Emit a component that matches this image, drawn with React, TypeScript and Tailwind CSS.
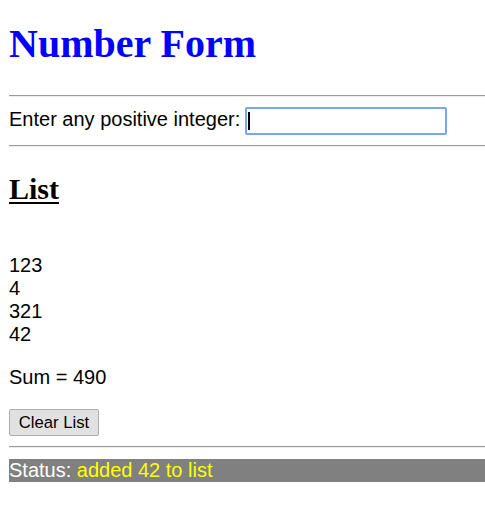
export default function App() {
  const items = [123, 4, 321, 42];
  const sum = items.reduce((a, b) => a + b, 0);

  return (
    <div className="min-h-screen bg-white pl-[9px] font-['Liberation_Sans',Arial,sans-serif] text-[20px] leading-[23px] text-black">
      {/* Title */}
      <h1 className="mt-[21px] mb-[28px] font-['Liberation_Serif','Times_New_Roman',serif] text-[40px] leading-[46px] font-bold text-[#0000ff]">
        Number Form
      </h1>

      <div className="h-[2px] border-t border-b border-t-[#9a9a9a] border-b-[#eeeeee]" />

      {/* Input row */}
      <div className="my-[10px] flex h-[28px] items-center">
        <span className="mb-[4px]">Enter any positive integer:</span>
        <div className="ml-[5px] flex h-[28px] w-[202px] items-center rounded-[2px] border-2 border-[#7aa7ea] bg-white">
          <span className="ml-[1px] h-[18px] w-[2px] bg-black" />
        </div>
      </div>

      <div className="h-[2px] border-t border-b border-t-[#9a9a9a] border-b-[#eeeeee]" />

      {/* List */}
      <h2 className="mt-[25px] font-['Liberation_Serif','Times_New_Roman',serif] text-[30px] leading-[34px] font-bold underline decoration-2 underline-offset-[3px]">
        List
      </h2>

      <div className="mt-[48px]">
        {items.map((n, i) => (
          <div key={i}>{n}</div>
        ))}
      </div>

      <p className="mt-[20px]">Sum = {sum}</p>

      <button className="mt-[20px] h-[27px] w-[90px] rounded-[2px] border border-[#adadad] bg-[#e1e1e1] text-[16.7px] leading-[19px] text-black">
        Clear List
      </button>

      <div className="mt-[10px] h-[2px] border-t border-b border-t-[#9a9a9a] border-b-[#eeeeee]" />

      {/* Status */}
      <div className="mt-[11px] h-[23px] bg-[#808080] text-white">
        Status: <span className="text-[#ffff00]">added 42 to list</span>
      </div>
    </div>
  );
}
